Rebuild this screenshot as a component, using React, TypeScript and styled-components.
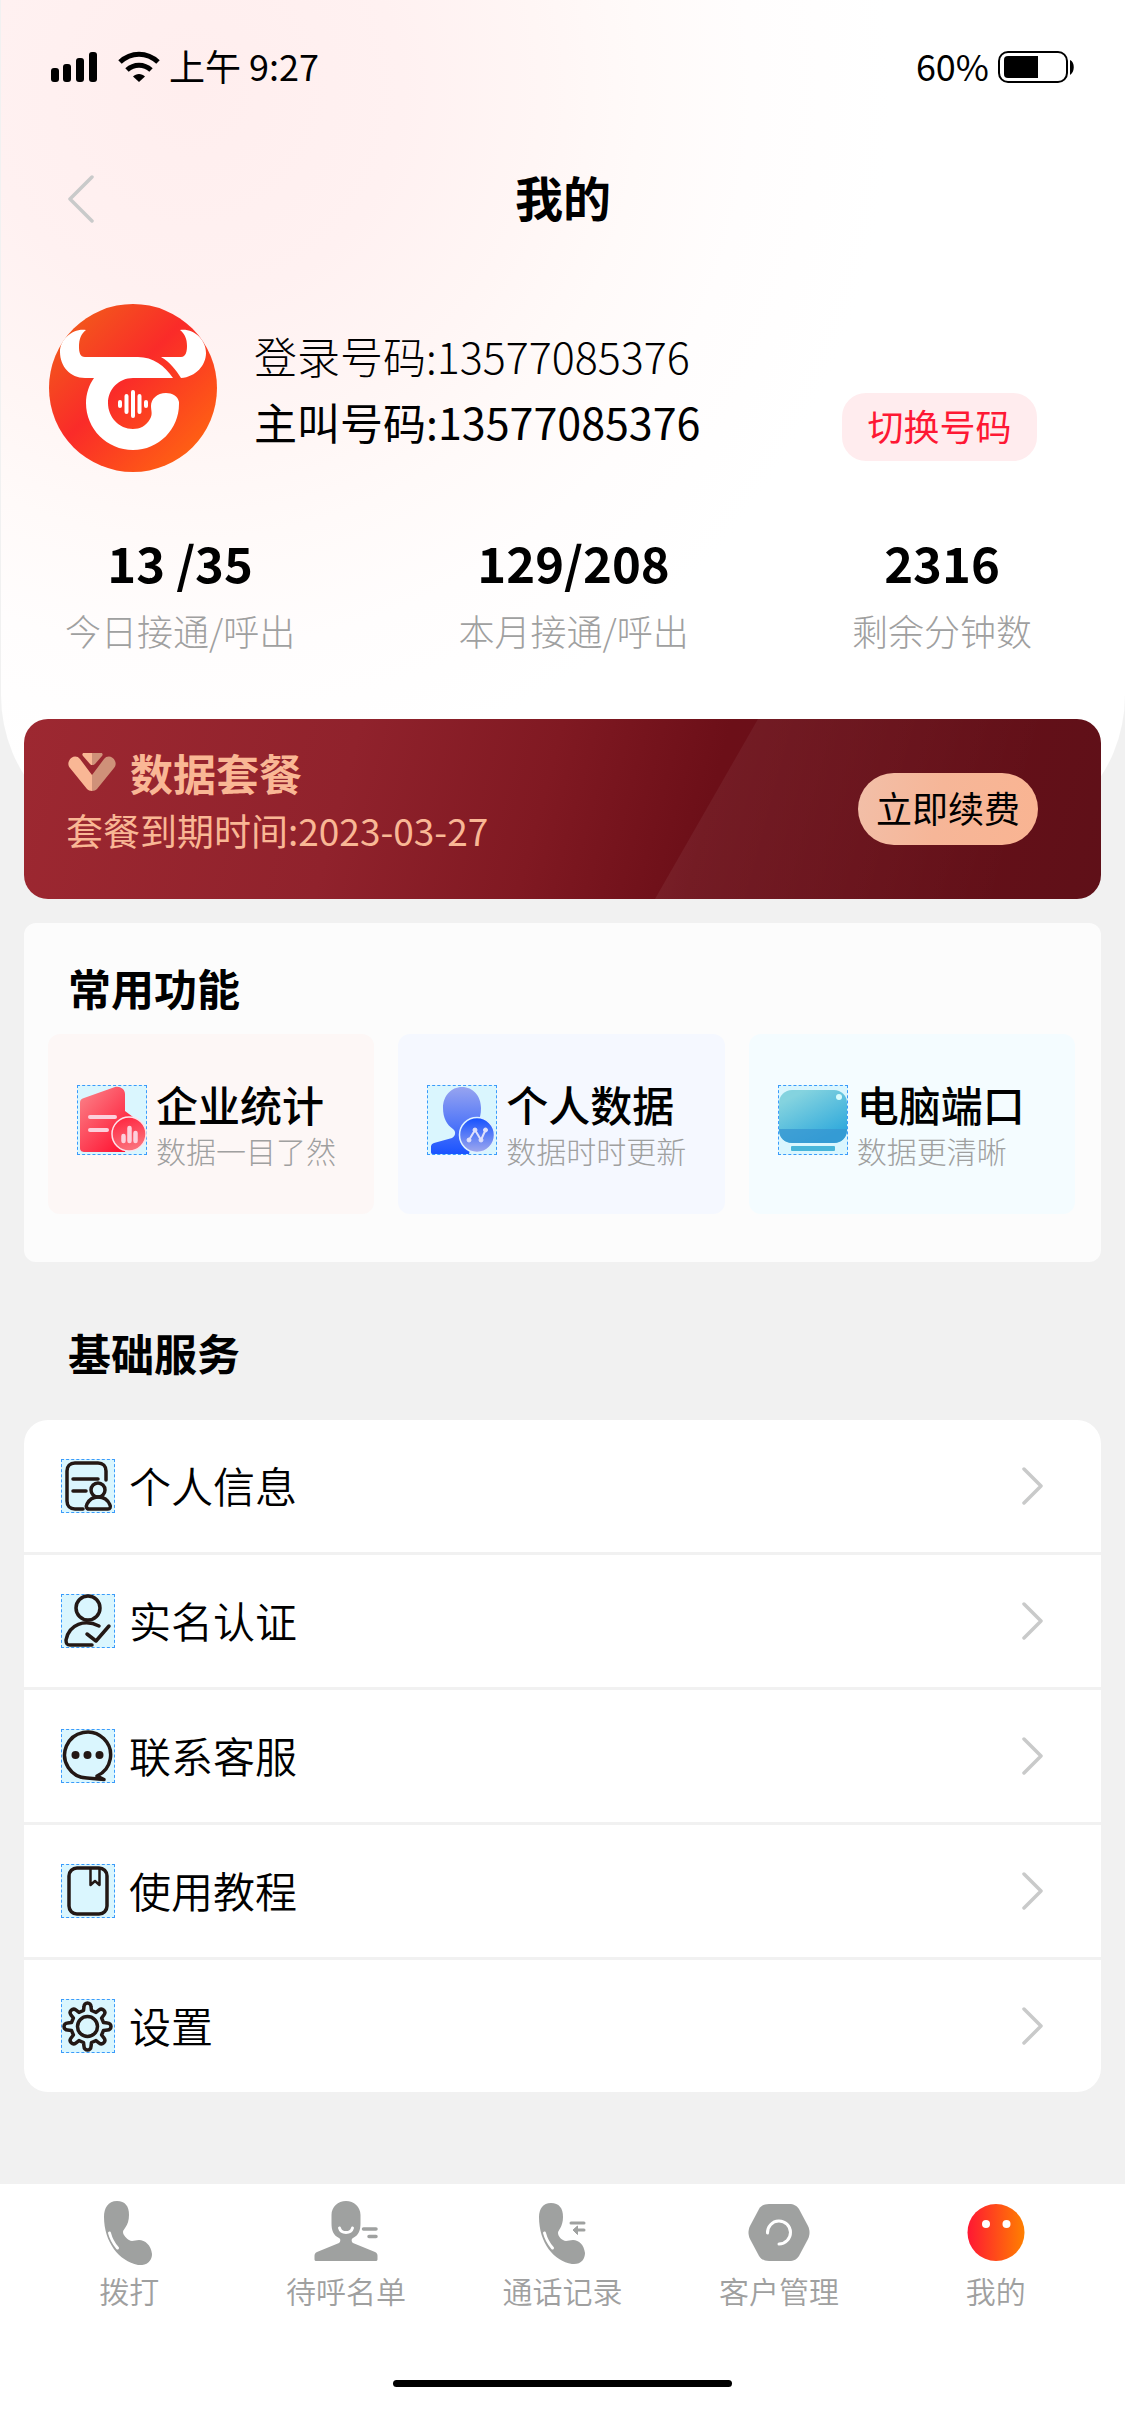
import React from 'react';
import styled, { createGlobalStyle } from 'styled-components';

const GlobalStyle = createGlobalStyle`
  *, *::before, *::after { box-sizing: border-box; }
  body {
    margin: 0;
    background: #f1f1f1;
    color: #000;
    font-family: "Noto Sans CJK SC", "Noto Sans", sans-serif;
    font-size: 36px;
  }
  button { font: inherit; color: inherit; border: 0; padding: 0; background: none; cursor: pointer; }
  a { color: inherit; text-decoration: none; }
  h1, h2, h3, p, ul, dl, dd { margin: 0; padding: 0; }
  ul { list-style: none; }
  svg { display: block; flex: none; }
`;

const Page = styled.div`
  display: flex;
  flex-direction: column;
  min-height: 100vh;
`;

const Hero = styled.header`
  margin-left: 1px;
  padding-bottom: 181px;
  border-radius: 0 0 150px 150px;
  background: radial-gradient(
    circle at 190px 90px,
    #ffeeee 0,
    #fff1f1 210px,
    #fff6f5 350px,
    #fffaf9 450px,
    #fffdfd 560px,
    #ffffff 700px
  );
`;

const StatusBar = styled.div`
  display: flex;
  align-items: center;
  justify-content: space-between;
  height: 134px;
  padding: 0 50px;
  line-height: 44px;
`;

const StatusGroup = styled.div`
  display: flex;
  align-items: center;
  gap: 9px;
`;

const StatusText = styled.span`
  padding-bottom: 4px;
`;

const SignalIcons = styled.div`
  display: flex;
  gap: 20px;
`;

const TitleBar = styled.div`
  display: grid;
  grid-template-columns: 1fr auto 1fr;
  align-items: center;
  height: 130px;
  padding: 0 65px;
`;

const BackButton = styled.button`
  justify-self: start;
`;

const PageTitle = styled.h1`
  padding-bottom: 6px;
  font-size: 48px;
  font-weight: 700;
  line-height: 66px;
`;

const Profile = styled.section`
  display: flex;
  align-items: center;
  padding: 40px 88px 0 48px;
`;

const Numbers = styled.div`
  flex: 1;
  margin-left: 37px;
`;

const NumberLine = styled.p<{ $weight: number }>`
  font-size: 43px;
  font-weight: ${(p) => p.$weight};
  line-height: 66px;
  white-space: nowrap;
`;

const SwitchButton = styled.button`
  align-self: flex-end;
  width: 195px;
  height: 68px;
  margin-bottom: 11px;
  padding-bottom: 4px;
  border-radius: 24px;
  background: #ffecee;
  color: #fe1834;
`;

const Stats = styled.dl`
  display: flex;
  justify-content: space-between;
  margin-top: 56px;
  padding: 0 93px 0 64px;
`;

const Stat = styled.div`
  display: flex;
  flex-direction: column-reverse;
  text-align: center;
  line-height: 68px;
`;

const StatLabel = styled.dt`
  color: #9fa0a0;
  font-size: 36px;
  font-weight: 300;
`;

const StatValue = styled.dd`
  font-size: 49px;
  font-weight: 700;
`;

const Main = styled.main`
  display: flex;
  flex-direction: column;
  margin-top: -126px;
  padding: 0 24px;
`;

const PlanCard = styled.section`
  position: relative;
  display: flex;
  align-items: center;
  justify-content: space-between;
  min-height: 180px;
  padding: 0 63px 0 42px;
  border-radius: 24px;
  overflow: hidden;
  color: #f9b795;
  background: linear-gradient(
    105deg,
    #9d2831 0%,
    #90222c 30%,
    #801922 48%,
    #6c0f18 63%,
    #5f1018 100%
  );

  &::after {
    content: "";
    position: absolute;
    top: 0;
    right: 0;
    bottom: 0;
    width: 446px;
    clip-path: polygon(103px 0, 100% 0, 100% 100%, 0 100%);
    background: linear-gradient(105deg, rgba(255, 255, 255, 0.06) 10%, rgba(255, 255, 255, 0) 80%);
  }
`;

const PlanText = styled.div`
  padding-bottom: 16px;
  line-height: 58px;
`;

const PlanTitle = styled.h2`
  display: flex;
  align-items: center;
  gap: 12px;
  font-size: 43px;
  font-weight: 700;
`;

const PlanExpiry = styled.p`
  font-size: 37px;
`;

const RenewButton = styled.button`
  position: relative;
  z-index: 1;
  width: 180px;
  height: 72px;
  padding-bottom: 4px;
  border-radius: 36px;
  background: linear-gradient(100deg, #f2bfa8, #f6b698 45%, #f9b492);
  color: #000;
`;

const FeaturePanel = styled.section`
  margin-top: 24px;
  padding: 34px 26px 48px 24px;
  border-radius: 12px;
  background: #fcfcfc;
`;

const SectionTitle = styled.h2`
  padding-left: 20px;
  font-size: 43px;
  font-weight: 700;
  line-height: 60px;
`;

const FeatureGrid = styled.div`
  display: grid;
  grid-template-columns: repeat(3, 1fr);
  gap: 24px;
  margin-top: 17px;
`;

const FeatureTile = styled.a<{ $tint: string }>`
  display: flex;
  align-items: flex-start;
  gap: 9px;
  height: 180px;
  padding: 47px 0 0 29px;
  border-radius: 12px;
  background: ${(p) => p.$tint};
`;

const IconFrame = styled.span<{ $size: number }>`
  flex: none;
  width: ${(p) => p.$size}px;
  height: ${(p) => p.$size}px;
  background: #daf6fe;
  border: 1px dashed #3a9bfb;

  svg {
    margin: -1px;
  }
`;

const FeatureIcon = styled(IconFrame)`
  margin-top: 4px;
`;

const FeatureName = styled.h3`
  font-size: 42px;
  font-weight: 500;
  line-height: 46px;
  white-space: nowrap;
`;

const FeatureNote = styled.p`
  color: #9fa0a0;
  font-size: 30px;
  font-weight: 300;
  line-height: 46px;
  white-space: nowrap;
`;

const ServiceSection = styled.section`
  padding-top: 60px;

  > h2 {
    padding-left: 44px;
  }
`;

const ServiceList = styled.ul`
  display: flex;
  flex-direction: column;
  gap: 3px;
  margin-top: 38px;
  border-radius: 24px;
  overflow: hidden;
`;

const ServiceLink = styled.a`
  display: flex;
  align-items: center;
  gap: 14px;
  height: 132px;
  padding: 0 58px 0 37px;
  background: #fff;
  font-size: 42px;
`;

const ServiceName = styled.span`
  flex: 1;
  padding-bottom: 4px;
  font-weight: 350;
`;

const TabBar = styled.footer`
  margin-top: 92px;
  padding: 17px 21px 49px;
  background: #fff;
`;

const Tabs = styled.nav`
  display: grid;
  grid-template-columns: repeat(5, 1fr);
`;

const Tab = styled.a`
  display: flex;
  flex-direction: column;
  align-items: center;
  gap: 7px;
  color: #9fa0a0;
  font-size: 30px;
  font-weight: 350;
  line-height: 36px;
`;

const HomeIndicator = styled.div`
  width: 339px;
  height: 7px;
  margin: 72px auto 0;
  border-radius: 4px;
  background: #000;
`;

const INK = '#231815';
const GREY = '#9fa1a0';

const Signal = () => (
  <svg width="47" height="32" viewBox="0 0 47 32" aria-hidden="true">
    <rect x="0" y="17" width="8" height="14" rx="3" />
    <rect x="12" y="13" width="8" height="18" rx="3" />
    <rect x="25" y="7" width="8" height="24" rx="3" />
    <rect x="38" y="1" width="8" height="30" rx="3" />
  </svg>
);

const Wifi = () => (
  <svg width="42" height="32" viewBox="0 0 42 32" aria-hidden="true">
    <path d="M2 11C13 .5 29 .5 40 11" fill="none" stroke="#000" strokeWidth="5" />
    <path d="M9 19C16 12.500 26 12.500 33 19" fill="none" stroke="#000" strokeWidth="5" />
    <path d="M21 31L15 25.500C18 22 24 22 27 25.500Z" />
  </svg>
);

const Battery = () => (
  <svg width="77" height="34" viewBox="0 0 77 34" aria-hidden="true">
    <rect x="1" y="2" width="68" height="30" rx="9" fill="#fff" stroke="#000" strokeWidth="2" />
    <path d="M10 6H40V28H10C7 28 6 26.500 6 24V10C6 7.500 7 6 10 6Z" />
    <path d="M72 10C77 12 77 22 72 25Z" />
  </svg>
);

const ChevronLeft = () => (
  <svg width="28" height="50" viewBox="0 0 28 50" fill="none" stroke="#c9caca" strokeWidth="3.500" strokeLinecap="round" strokeLinejoin="round" aria-hidden="true">
    <path d="M26 3L4 25L26 47" />
  </svg>
);

const ChevronRight = () => (
  <svg width="22" height="38" viewBox="0 0 22 38" fill="none" stroke="#c9caca" strokeWidth="3.500" strokeLinecap="round" strokeLinejoin="round" aria-hidden="true">
    <path d="M3 2L20 19L3 36" />
  </svg>
);

const BullLogo = () => (
  <svg width="168" height="168" viewBox="0 0 168 168" role="img" aria-label="头像">
    <defs>
      <linearGradient id="bull" x1="0.1" y1="0.1" x2="0.9" y2="0.9">
        <stop offset="0" stopColor="#f25a1b" />
        <stop offset="0.44" stopColor="#fa2b29" />
        <stop offset="1" stopColor="#ff6412" />
      </linearGradient>
    </defs>
    <circle cx="84" cy="84" r="84" fill="url(#bull)" />
    <g fill="#fff">
      <path d="M37 26C24 24 11 35 11 48C11 62 21 74 36 74H45C40 81 37 90 37 99C37 125 58 146 84 146C110 146 130 125 130 100V98C129 92 123 89 117 89C108 89 102 95 102 102C102 107 104 110 101 115C97 122 91 125 84 125C70 125 59 113 59 99C59 85 70 74 84 74H124C116 62 104 53 89 53H36C31 53 30 48 30 43C30 35 32 30 37 26Z" />
      <path d="M131 26C144 24 157 35 157 49C157 61 147 73 132 74C127 66 121 58 112 53H132C137 53 138 47 138 42C138 35 136 30 131 26Z" />
    </g>
    <g stroke="#fff" strokeWidth="4" strokeLinecap="round">
      <path d="M71 98V102M77.500 92V108M84 88V112M90.500 92V108M97 98V102" />
    </g>
  </svg>
);

const PlanMark = () => (
  <svg width="52" height="40" viewBox="-2 -1 52 40" aria-hidden="true">
    <path d="M1 8C3 3 9 2 12 6L24 22V38C22 38 20 37 19 36L2 15C0 13 0 10 1 8Z" fill="#f9b795" />
    <path d="M47 8C45 3 39 2 36 6L24 22V38C26 38 28 37 29 36L46 15C48 13 48 10 47 8Z" fill="#cf9179" />
    <path d="M24 0H16C14 0 14 2 15 3L22 11C23 12 23 12 24 12Z" fill="#f9b795" />
    <path d="M24 0H33C35 0 35 2 34 3L27 11C26 12 25 12 24 12Z" fill="#cf9179" />
  </svg>
);

const CompanyIcon = () => (
  <svg width="70" height="70" viewBox="0 0 70 70" aria-hidden="true">
    <defs>
      <linearGradient id="tower" x1="0" y1="0.1" x2="0.8" y2="1">
        <stop offset="0" stopColor="#fb8087" />
        <stop offset="1" stopColor="#ff1130" />
      </linearGradient>
      <linearGradient id="towerBadge" x1="0" y1="0" x2="0.3" y2="1">
        <stop offset="0" stopColor="#ff1f3b" />
        <stop offset="1" stopColor="#fb6f7a" />
      </linearGradient>
    </defs>
    <path d="M7 13L38 2C43 1 48 4 48 9V26L56 32L48 67H8C5 67 3 66 3 63V18C3 15 4 14 7 13Z" fill="url(#tower)" />
    <path d="M13 32H38M13 45H30" stroke="#fcd0dc" strokeWidth="4" strokeLinecap="round" />
    <circle cx="52" cy="49" r="17" fill="url(#towerBadge)" stroke="#fde3ea" strokeWidth="1.5" />
    <path d="M46.500 51V56M52.500 43V56M58.500 48V56" stroke="#fcd0dc" strokeWidth="4.500" strokeLinecap="round" />
  </svg>
);

const PersonalIcon = () => (
  <svg width="70" height="70" viewBox="0 0 70 70" aria-hidden="true">
    <defs>
      <linearGradient id="bust" x1="0" y1="0" x2="0" y2="1">
        <stop offset="0" stopColor="#97a4f0" />
        <stop offset="1" stopColor="#1a53ff" />
      </linearGradient>
      <linearGradient id="bustBadge" x1="0" y1="0" x2="0" y2="1">
        <stop offset="0" stopColor="#1450ff" />
        <stop offset="1" stopColor="#a0a9ee" />
      </linearGradient>
    </defs>
    <path d="M35 2C24 2 16 11 16 23C16 33 20 40 26 44C29 46 29 51 25 53L7 58C4 59 4 61 4 63V67C4 69 5 69 7 69H42L50 38C53 34 54 29 54 23C54 11 46 2 35 2Z" fill="url(#bust)" />
    <circle cx="50" cy="50" r="17.500" fill="url(#bustBadge)" stroke="#dff1ff" strokeWidth="1.500" />
    <g fill="#dfe0fb" stroke="#dfe0fb">
      <path d="M42 55L48 45L54 55L58.500 45" fill="none" strokeWidth="2" />
      <circle cx="42" cy="55" r="2" /><circle cx="48" cy="45" r="2" />
      <circle cx="54" cy="55" r="2" /><circle cx="58.500" cy="45" r="2" />
    </g>
  </svg>
);

const ComputerIcon = () => (
  <svg width="70" height="70" viewBox="0 0 70 70" aria-hidden="true">
    <defs>
      <linearGradient id="screen" x1="0.1" y1="0" x2="0.7" y2="0.9">
        <stop offset="0.15" stopColor="#84d3df" />
        <stop offset="1" stopColor="#33abdc" />
      </linearGradient>
    </defs>
    <rect x="1" y="5" width="68" height="53" rx="13" fill="url(#screen)" />
    <path d="M1 44H69V45C69 53 63 58 56 58H14C7 58 1 53 1 45Z" fill="#3596d2" opacity="0.75" />
    <circle cx="61" cy="12" r="3" fill="#d6fbfc" />
    <rect x="13" y="61" width="44" height="5" rx="1" fill="#48b6da" />
  </svg>
);

const LineIcon = ({ children }: { children: React.ReactNode }) => (
  <svg width="54" height="54" viewBox="0 0 54 54" fill="none" stroke={INK} strokeWidth="3.500" strokeLinecap="round" strokeLinejoin="round" aria-hidden="true">
    {children}
  </svg>
);

const ProfileIcon = () => (
  <LineIcon>
    <path d="M22 50H14C9 50 6 47 6 42V12C6 7 9 4 14 4H37C42 4 45 7 45 12V21M12 20H37M12 32H25" />
    <circle cx="37" cy="31" r="7" />
    <path d="M28 50C25 50 25 47 26 45C28 41 32 38 37 38C43 38 47 41 49 46C50 48 49 50 47 50Z" />
  </LineIcon>
);

const VerifyIcon = () => (
  <LineIcon>
    <circle cx="27" cy="14" r="12" />
    <path d="M38 32C24 25 8 30 5 46C5 50 6 51 9 51H31M26 40L35 47L48 32" />
  </LineIcon>
);

const SupportIcon = () => (
  <LineIcon>
    <path d="M36 47A23 23 0 1 0 26 49L43 50.500L36 47Z" />
    <g fill={INK} stroke="none">
      <circle cx="14.500" cy="26" r="4" /><circle cx="26.500" cy="26" r="4" /><circle cx="38.500" cy="26" r="4" />
    </g>
  </LineIcon>
);

const GuideIcon = () => (
  <LineIcon>
    <rect x="8" y="4" width="38" height="46" rx="8" />
    <path d="M29.500 5V21L34 17L38.500 21V5" strokeWidth="2.500" />
  </LineIcon>
);

const gearOutline = () => {
  const parts: string[] = [];
  for (let i = 0; i < 8; i += 1) {
    const a = (i * Math.PI) / 4;
    const at = (x: number, y: number) =>
      `${(26.5 + x * Math.cos(a) - y * Math.sin(a)).toFixed(1)} ${(27.5 + x * Math.sin(a) + y * Math.cos(a)).toFixed(1)}`;
    parts.push(`${i ? 'L' : 'M'}${at(-4, -16)}L${at(-3.5, -20)}A3.5 3.5 0 0 1 ${at(3.5, -20)}L${at(4, -16)}`);
  }
  return `${parts.join('')}Z`;
};

const SettingsIcon = () => (
  <LineIcon>
    <path d={gearOutline()} />
    <circle cx="26.500" cy="27.500" r="10" />
  </LineIcon>
);

const TabIcon = ({ children }: { children: React.ReactNode }) => (
  <svg width="64" height="64" viewBox="0 0 64 64" fill={GREY} aria-hidden="true">{children}</svg>
);

const DialIcon = () => (
  <TabIcon>
    <path d="M20 0C11 0 7 7 7 16C7 41 22 60 41 64C51 65 55 59 55 53C54 44 48 39 42 39C38 39 35 41 32 39C30 38 26 34 26 31C26 28 32 25 32 14C32 5 28 0 20 0Z" />
    <path d="M12.500 32C14 38 17 43 20.500 47" fill="none" stroke="#fff" strokeWidth="3" strokeLinecap="round" />
  </TabIcon>
);

const QueueIcon = () => (
  <TabIcon>
    <path d="M32 0C24 0 17.500 6 17.500 14V22C17.500 29 19 34 25 37C27 38 26.500 41 25 42L3 51C1 52 .5 53 .5 55V58C.5 59.500 1 60 2.500 60H61.500C63 60 63.500 59.500 63.500 58V55C63.500 53 63 52 61 51L39 42C37.500 41 37 38 39 37C45 34 46.500 29 46.500 22V14C46.500 6 40 0 32 0Z" />
    <path d="M25.500 27C27 33 37 33 38.500 27" fill="none" stroke="#fff" strokeWidth="3" strokeLinecap="round" />
    <path d="M49.500 28H62M55 35.500H62" stroke={GREY} strokeWidth="3.500" strokeLinecap="round" />
  </TabIcon>
);

const CallLogIcon = () => (
  <TabIcon>
    <path d="M21 2C13 2 9 8 9 16C9 42 24 60 42 63C51 64 55 58 55 52C54 44 49 39 43 39C39 39 36 41 33 39C31 38 28 35 28 32C28 29 33 26 33 16C33 7 29 2 21 2Z" />
    <path d="M14.500 32C16 38 19 43 22.500 47" fill="none" stroke="#fff" strokeWidth="3" strokeLinecap="round" />
    <path d="M41 22H54M47 29H54" stroke={GREY} strokeWidth="3" strokeLinecap="round" />
    <path d="M43 29L47.500 25V33.500Z" stroke={GREY} strokeLinejoin="round" />
  </TabIcon>
);

const CustomerIcon = () => (
  <TabIcon>
    <path d="M22 3H42C47 3 50 5 52 8L61 25C63 29 63 34 61 38L52 55C50 58 47 60 42 60H22C17 60 14 58 12 55L3 38C1 34 1 29 3 25L12 8C14 5 17 3 22 3Z" />
    <path d="M20.500 32A11.500 11.500 0 1 1 32 43" fill="none" stroke="#fff" strokeWidth="3" strokeLinecap="round" />
  </TabIcon>
);

const MineIcon = () => (
  <TabIcon>
    <defs>
      <linearGradient id="mine">
        <stop offset="0" stopColor="#ff1733" />
        <stop offset="1" stopColor="#ff8000" />
      </linearGradient>
    </defs>
    <circle cx="32" cy="31.500" r="28.500" fill="url(#mine)" />
    <circle cx="22" cy="23" r="4" fill="#fff" />
    <circle cx="42.500" cy="23" r="4" fill="#fff" />
  </TabIcon>
);

const stats = [
  { label: '今日接通/呼出', value: '13 /35' },
  { label: '本月接通/呼出', value: '129/208' },
  { label: '剩余分钟数', value: '2316' },
];

const features = [
  { name: '企业统计', note: '数据一目了然', tint: '#fdf7f6', Icon: CompanyIcon },
  { name: '个人数据', note: '数据时时更新', tint: '#f5f8ff', Icon: PersonalIcon },
  { name: '电脑端口', note: '数据更清晰', tint: '#f4fcff', Icon: ComputerIcon },
];

const services = [
  { name: '个人信息', Icon: ProfileIcon },
  { name: '实名认证', Icon: VerifyIcon },
  { name: '联系客服', Icon: SupportIcon },
  { name: '使用教程', Icon: GuideIcon },
  { name: '设置', Icon: SettingsIcon },
];

const tabs = [
  { name: '拨打', Icon: DialIcon },
  { name: '待呼名单', Icon: QueueIcon },
  { name: '通话记录', Icon: CallLogIcon },
  { name: '客户管理', Icon: CustomerIcon },
  { name: '我的', Icon: MineIcon },
];

export default function App() {
  return (
    <Page>
      <GlobalStyle />
      <Hero>
        <StatusBar>
          <StatusGroup>
            <SignalIcons>
              <Signal />
              <Wifi />
            </SignalIcons>
            <StatusText>上午 9:27</StatusText>
          </StatusGroup>
          <StatusGroup>
            <StatusText>60%</StatusText>
            <Battery />
          </StatusGroup>
        </StatusBar>
        <TitleBar>
          <BackButton type="button" aria-label="返回">
            <ChevronLeft />
          </BackButton>
          <PageTitle>我的</PageTitle>
        </TitleBar>
        <Profile>
          <BullLogo />
          <Numbers>
            <NumberLine $weight={300}>登录号码:13577085376</NumberLine>
            <NumberLine $weight={400}>主叫号码:13577085376</NumberLine>
          </Numbers>
          <SwitchButton type="button">切换号码</SwitchButton>
        </Profile>
        <Stats>
          {stats.map((s) => (
            <Stat key={s.label}>
              <StatLabel>{s.label}</StatLabel>
              <StatValue>{s.value}</StatValue>
            </Stat>
          ))}
        </Stats>
      </Hero>
      <Main>
        <PlanCard>
          <PlanText>
            <PlanTitle>
              <PlanMark />
              数据套餐
            </PlanTitle>
            <PlanExpiry>套餐到期时间:2023-03-27</PlanExpiry>
          </PlanText>
          <RenewButton type="button">立即续费</RenewButton>
        </PlanCard>
        <FeaturePanel>
          <SectionTitle>常用功能</SectionTitle>
          <FeatureGrid>
            {features.map(({ name, note, tint, Icon }) => (
              <FeatureTile key={name} href="#" $tint={tint}>
                <FeatureIcon $size={70}>
                  <Icon />
                </FeatureIcon>
                <div>
                  <FeatureName>{name}</FeatureName>
                  <FeatureNote>{note}</FeatureNote>
                </div>
              </FeatureTile>
            ))}
          </FeatureGrid>
        </FeaturePanel>
        <ServiceSection>
          <SectionTitle>基础服务</SectionTitle>
          <ServiceList>
            {services.map(({ name, Icon }) => (
              <li key={name}>
                <ServiceLink href="#">
                  <IconFrame $size={54}>
                    <Icon />
                  </IconFrame>
                  <ServiceName>{name}</ServiceName>
                  <ChevronRight />
                </ServiceLink>
              </li>
            ))}
          </ServiceList>
        </ServiceSection>
      </Main>
      <TabBar>
        <Tabs>
          {tabs.map(({ name, Icon }) => (
            <Tab key={name} href="#">
              <Icon />
              {name}
            </Tab>
          ))}
        </Tabs>
        <HomeIndicator />
      </TabBar>
    </Page>
  );
}
